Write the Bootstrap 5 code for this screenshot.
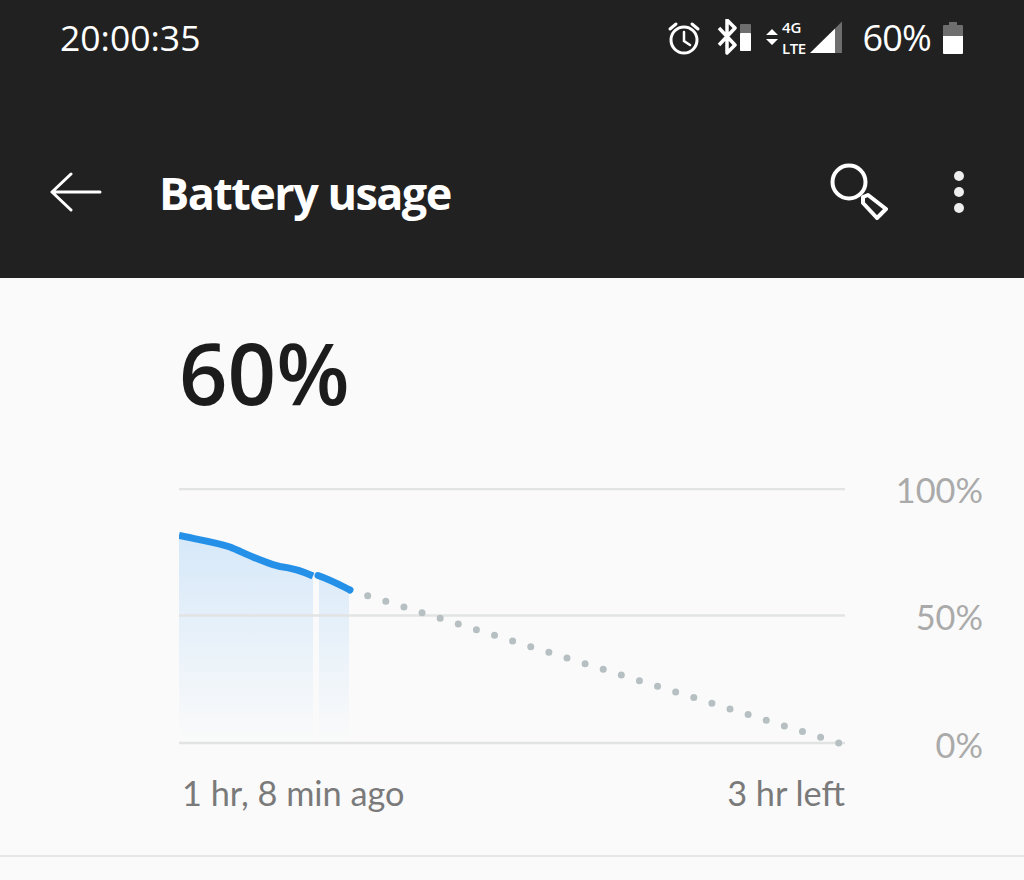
<!DOCTYPE html>
<html lang="en">
<head>
<meta charset="utf-8">
<title>Battery usage</title>
<link href="https://cdn.jsdelivr.net/npm/bootstrap@5.3.0/dist/css/bootstrap.min.css" rel="stylesheet">
<style>
html,body{height:100%}
body{background:#fafafa;font-family:"Open Sans","Noto Sans",sans-serif;overflow:hidden}
svg{display:block;flex:none}
.app-head{background:#212121;height:278px;color:#fff}
.status-row{height:76px;padding:0 61px 0 60px}
.clock-text{font-size:35.5px;font-weight:400;line-height:1}
.pct-text{font-size:36px;font-weight:400;line-height:1;margin:0 12px 0 12px;letter-spacing:-.8px}
.bt-gap{margin-left:13px}
.tool-row{height:202px;padding:30px 60px 0 50px}
.page-title{font-size:45px;font-weight:700;margin:0 0 0 57px;line-height:1;letter-spacing:-1.55px}
.dots-gap{margin-left:66px}
.chart-wrap{padding:0 41px 0 179px}
.big-value{font-size:85px;font-weight:600;color:#1c1c1c;line-height:1;height:210px;padding-top:52px;margin:0}
.axis-col{width:138px;height:289px;margin-top:-15px;color:#aaa;font-size:34.300px;font-family:Lato,sans-serif;font-weight:400;line-height:1;text-align:right}
.axis-row{width:666px;margin-top:14px;color:#7a7a7a;font-size:34.300px;font-family:Lato,sans-serif;font-weight:400;line-height:1;padding:0 0 0 3px}
.end-rule{border-top:2px solid #e6e6e6;margin-top:45px}
</style>
</head>
<body>
<header class="app-head">
  <div class="status-row d-flex align-items-center">
    <span class="clock-text me-auto">20:00:35</span>
    <svg width="34" height="34" viewBox="0 0 34 34" fill="none" stroke="#fff" stroke-width="3" stroke-linecap="round">
      <circle cx="17" cy="19" r="13"/><path d="M17 11v9l6 4" stroke-width="2.500"/><path d="M3 8l6-5M31 8l-6-5"/>
    </svg>
    <svg class="ms-3" width="36" height="38" viewBox="0 0 36 38" fill="none">
      <path d="M2 9l16 17-8 8V1l8 8L2 26" stroke="#fff" stroke-width="3.500" stroke-linejoin="round"/>
      <rect x="23" y="5" width="11" height="27" rx="1" fill="#6e6e6e"/>
      <rect x="23" y="14" width="11" height="18" rx="1" fill="#fff"/>
    </svg>
    <svg class="bt-gap" width="84" height="44" viewBox="0 -4 84 44">
      <path d="M6 9l6 6H0zM6 25L0 19h12z" fill="#fff"/>
      <text x="16" y="13" fill="#fff" font-family="Open Sans,sans-serif" font-size="15" font-weight="600">4G</text>
      <text x="16" y="34" fill="#fff" font-family="Open Sans,sans-serif" font-size="15" font-weight="600" textLength="24">LTE</text>
      <path d="M44 33L69 8.500V33z" fill="#fff"/><path d="M69 8.500l7-7V33h-7z" fill="#6e6e6e"/>
    </svg>
    <span class="pct-text">60%</span>
    <svg width="20" height="34" viewBox="0 0 20 34">
      <path d="M6 1h8v3h5a1 1 0 0 1 1 1v11H0V5a1 1 0 0 1 1-1h5z" fill="#6e6e6e"/>
      <path d="M0 15h20v17a1 1 0 0 1-1 1H1a1 1 0 0 1-1-1z" fill="#fff"/>
    </svg>
  </div>
  <div class="tool-row d-flex align-items-center">
    <svg width="52" height="40" viewBox="0 0 52 40" fill="none" stroke="#fff" stroke-width="3" stroke-linecap="round" stroke-linejoin="round">
      <path d="M2 20h48M21 2L2 20l19 18"/>
    </svg>
    <h1 class="page-title me-auto">Battery usage</h1>
    <svg width="60" height="60" viewBox="0 0 60 60" fill="none" stroke="#fff" stroke-width="4" stroke-linejoin="round">
      <circle cx="21" cy="20" r="16.500"/>
      <path d="M35 35l5-2 18 14-9 9-14-15z"/>
    </svg>
    <svg class="dots-gap" width="10" height="42" viewBox="0 0 10 42" fill="#eee">
      <circle cx="5" cy="5" r="5"/><circle cx="5" cy="21" r="5"/><circle cx="5" cy="37" r="5"/>
    </svg>
  </div>
</header>
<main>
  <div class="chart-wrap">
    <p class="big-value">60%</p>
    <div class="d-flex">
      <svg width="666" height="270" viewBox="179 488 666 270" fill="none">
        <defs>
          <linearGradient id="areaFade" x1="0" y1="535" x2="0" y2="740" gradientUnits="userSpaceOnUse">
            <stop offset="0" stop-color="#d6e8f9"/><stop offset="1" stop-color="#fafafa"/>
          </linearGradient>
        </defs>
        <path d="M179 535.500C195 539 215 542 230 547C240 551 247 555 258 559C266 562 272 565 280 566.500C292 568 302 571 313 576V742H179z" fill="url(#areaFade)"/>
        <path d="M319 576C331 580 340 585 349 590V742H319z" fill="url(#areaFade)"/>
        <path d="M179 489H845M179 615.500H845M179 743H845" stroke="#e2e4e4" stroke-width="2.500"/>
        <path d="M179 535.500C195 539 215 542 230 547C240 551 247 555 258 559C266 562 272 565 280 566.500C292 568 302 571 313 576" stroke="#2590e8" stroke-width="7"/>
        <path d="M318 575.500C331 580 340 585 350 590" stroke="#2590e8" stroke-width="7" stroke-linecap="round"/>
        <path d="M367.700 595.700L839 743" stroke="#b6c0c2" stroke-width="7" stroke-linecap="round" stroke-dasharray="0 18.980"/>
      </svg>
      <div class="axis-col d-flex flex-column justify-content-between">
        <span>100%</span><span>50%</span><span>0%</span>
      </div>
    </div>
    <div class="axis-row d-flex justify-content-between">
      <span>1 hr, 8 min ago</span><span>3 hr left</span>
    </div>
  </div>
  <div class="end-rule"></div>
</main>
</body>
</html>
